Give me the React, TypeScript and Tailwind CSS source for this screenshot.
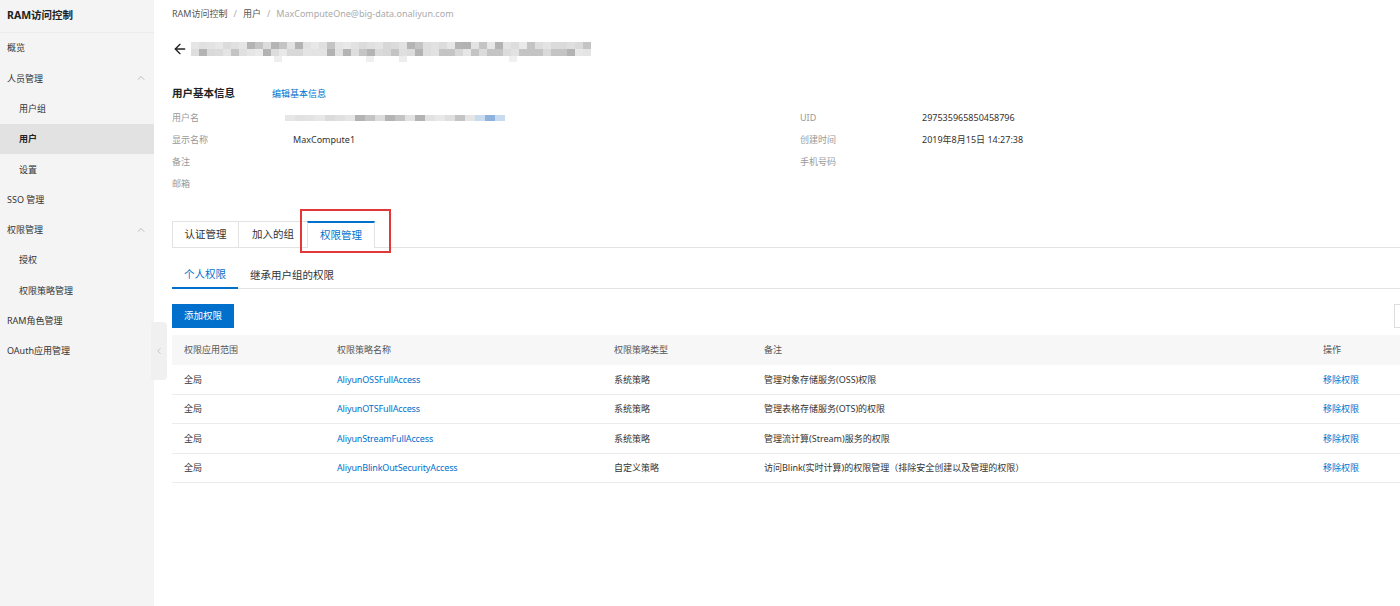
import React from 'react';
import { ArrowLeft, ChevronUp, ChevronLeft } from 'lucide-react';

const navItems = [
  { label: '概览', level: 0 },
  { label: '人员管理', level: 0, open: true },
  { label: '用户组', level: 1 },
  { label: '用户', level: 1, active: true },
  { label: '设置', level: 1 },
  { label: 'SSO 管理', level: 0 },
  { label: '权限管理', level: 0, open: true },
  { label: '授权', level: 1 },
  { label: '权限策略管理', level: 1 },
  { label: 'RAM角色管理', level: 0 },
  { label: 'OAuth应用管理', level: 0 },
];

const policies = [
  { scope: '全局', name: 'AliyunOSSFullAccess', type: '系统策略', note: '管理对象存储服务(OSS)权限' },
  { scope: '全局', name: 'AliyunOTSFullAccess', type: '系统策略', note: '管理表格存储服务(OTS)的权限' },
  { scope: '全局', name: 'AliyunStreamFullAccess', type: '系统策略', note: '管理流计算(Stream)服务的权限' },
  { scope: '全局', name: 'AliyunBlinkOutSecurityAccess', type: '自定义策略', note: '访问Blink(实时计算)的权限管理（排除安全创建以及管理的权限）' },
];

// stand-in for the mosaic that hides the account name
function seeded(n: number) {
  const x = Math.sin(n * 12.9898) * 43758.5453;
  return x - Math.floor(x);
}

function Mosaic({ cols, rows, size, h, tail }: { cols: number; rows: number; size: number; h: number; tail?: boolean }) {
  const cells = [];
  for (let r = 0; r < rows; r++) {
    for (let c = 0; c < cols; c++) {
      const v = seeded(r * 97 + c + 3);
      let shade = 215 + Math.round(v * 26);
      if (v > 0.9) shade = 160 + Math.round(v * 20);
      else if (v > 0.72) shade = 196;
      let color = `rgb(${shade},${shade},${shade})`;
      if (tail && c >= cols - 3) color = c === cols - 2 ? '#8fb2dc' : '#c9dbef';
      cells.push(<div key={`${r}-${c}`} style={{ width: size, height: h, background: color }} />);
    }
  }
  return (
    <div className="grid" style={{ gridTemplateColumns: `repeat(${cols}, ${size}px)` }}>
      {cells}
    </div>
  );
}

export default function App() {
  return (
    <div className="relative flex h-[606px] w-[1400px] overflow-hidden bg-white font-['Noto_Sans','Noto_Sans_CJK_SC',sans-serif] text-[9px] text-[#333]">
      {/* sidebar */}
      <aside className="w-[154px] shrink-0 bg-[#f4f4f4]">
        <div className="flex h-[33px] items-center border-b border-[#ececec] pl-[7px] text-[10.5px] font-bold text-[#222]">
          RAM访问控制
        </div>
        {navItems.map((item) => (
          <div
            key={item.label}
            className={`flex h-[30.3px] items-center justify-between pr-[7px] ${item.level ? 'pl-[19px]' : 'pl-[7px]'} ${item.active ? 'bg-[#e2e2e2] font-bold text-[#222]' : ''}`}
          >
            <span>{item.label}</span>
            {item.open && <ChevronUp size={12} strokeWidth={1.5} className="text-[#aaa]" />}
          </div>
        ))}
      </aside>

      {/* collapse handle */}
      <div className="absolute left-[151px] top-[322px] flex h-[58px] w-[16px] items-center justify-center rounded-r-sm bg-[#f0f0f0]">
        <ChevronLeft size={10} strokeWidth={1.5} className="text-[#aaa]" />
      </div>

      {/* main */}
      <main className="w-[1300px] shrink-0 pl-[18px]">
        <div className="flex h-[28px] items-center gap-[6px] text-[#555]">
          <span>RAM访问控制</span>
          <span className="text-[#aaa]">/</span>
          <span>用户</span>
          <span className="text-[#aaa]">/</span>
          <span className="text-[#aaa]">MaxComputeOne@big-data.onaliyun.com</span>
        </div>

        <div className="mt-[10px] flex h-[22px] items-start gap-[3px]">
          <ArrowLeft size={16} strokeWidth={2} className="mt-[3px] text-[#222]" />
          <div className="mt-[4px]">
            <Mosaic cols={50} rows={2} size={8} h={7} />
            <div className="flex">
              <div className="ml-[83px] h-[6px] w-[8px] bg-[#eeeeee]" />
              <div className="ml-[84px] h-[6px] w-[8px] bg-[#efefef]" />
              <div className="ml-[25px] h-[6px] w-[8px] bg-[#ededed]" />
              <div className="ml-[102px] h-[6px] w-[8px] bg-[#f0f0f0]" />
            </div>
          </div>
        </div>

        <div className="mt-[24px] flex h-[20px] items-center">
          <span className="w-[100px] text-[10.5px] font-bold text-[#222]">用户基本信息</span>
          <span className="text-[#0070cc]">编辑基本信息</span>
        </div>

        <div className="mt-[3px] flex">
          <div className="w-[628px]">
            <div className="flex h-[22px] items-center">
              <span className="w-[113px] text-[#999]">用户名</span>
              <Mosaic cols={22} rows={1} size={10} h={6} tail />
            </div>
            <div className="flex h-[22px] items-center">
              <span className="w-[121px] text-[#999]">显示名称</span>
              <span>MaxCompute1</span>
            </div>
            <div className="flex h-[22px] items-center text-[#999]">备注</div>
            <div className="flex h-[22px] items-center text-[#999]">邮箱</div>
          </div>
          <div>
            <div className="flex h-[22px] items-center">
              <span className="w-[122px] text-[#999]">UID</span>
              <span>297535965850458796</span>
            </div>
            <div className="flex h-[22px] items-center">
              <span className="w-[122px] text-[#999]">创建时间</span>
              <span>2019年8月15日 14:27:38</span>
            </div>
            <div className="flex h-[22px] items-center text-[#999]">手机号码</div>
          </div>
        </div>

        {/* tabs */}
        <div className="mt-[26px] flex h-[27px] border-b border-[#e3e3e3] text-[10.5px]">
          <div className="flex w-[67px] items-center justify-center border-l border-r border-t border-[#e3e3e3]">认证管理</div>
          <div className="flex w-[68px] items-center justify-center border-t border-[#e3e3e3]">加入的组</div>
          <div className="-mb-px flex w-[68px] items-center justify-center border-l border-r border-t-2 border-[#e3e3e3] border-t-[#0070cc] bg-white text-[#0070cc]">
            权限管理
          </div>
        </div>

        <div className="mt-[15px] flex h-[26px] border-b border-[#e3e3e3] text-[10.5px]">
          <div className="-mb-px flex w-[66px] items-center justify-center border-b-2 border-[#0070cc] text-[#0070cc]">个人权限</div>
          <div className="flex items-center pl-[12px]">继承用户组的权限</div>
        </div>

        <div className="mt-[15px] flex items-center justify-between">
          <button className="flex h-[24px] w-[62px] items-center justify-center bg-[#0070cc] text-[9.5px] text-white">添加权限</button>
          <div className="h-[24px] w-[60px] border border-[#ddd] bg-white" />
        </div>

        {/* table */}
        <div className="mt-[7px]">
          <div className="flex h-[30px] items-center bg-[#f7f7f7] text-[#555]">
            <div className="w-[153px] pl-[12px]">权限应用范围</div>
            <div className="w-[277px] pl-[12px]">权限策略名称</div>
            <div className="w-[150px] pl-[12px]">权限策略类型</div>
            <div className="w-[559px] pl-[12px]">备注</div>
            <div className="pl-[12px]">操作</div>
          </div>
          {policies.map((p) => (
            <div key={p.name} className="flex h-[29.5px] items-center border-b border-[#ececec]">
              <div className="w-[153px] pl-[12px]">{p.scope}</div>
              <div className="w-[277px] pl-[12px] tracking-[-0.15px] text-[#0070cc]">{p.name}</div>
              <div className="w-[150px] pl-[12px]">{p.type}</div>
              <div className="w-[559px] pl-[12px]">{p.note}</div>
              <div className="pl-[12px] text-[#0070cc]">移除权限</div>
            </div>
          ))}
        </div>
      </main>

      {/* highlight box */}
      <div className="absolute left-[300px] top-[209px] h-[44px] w-[91px] border-2 border-[#e2383a]" />
    </div>
  );
}
